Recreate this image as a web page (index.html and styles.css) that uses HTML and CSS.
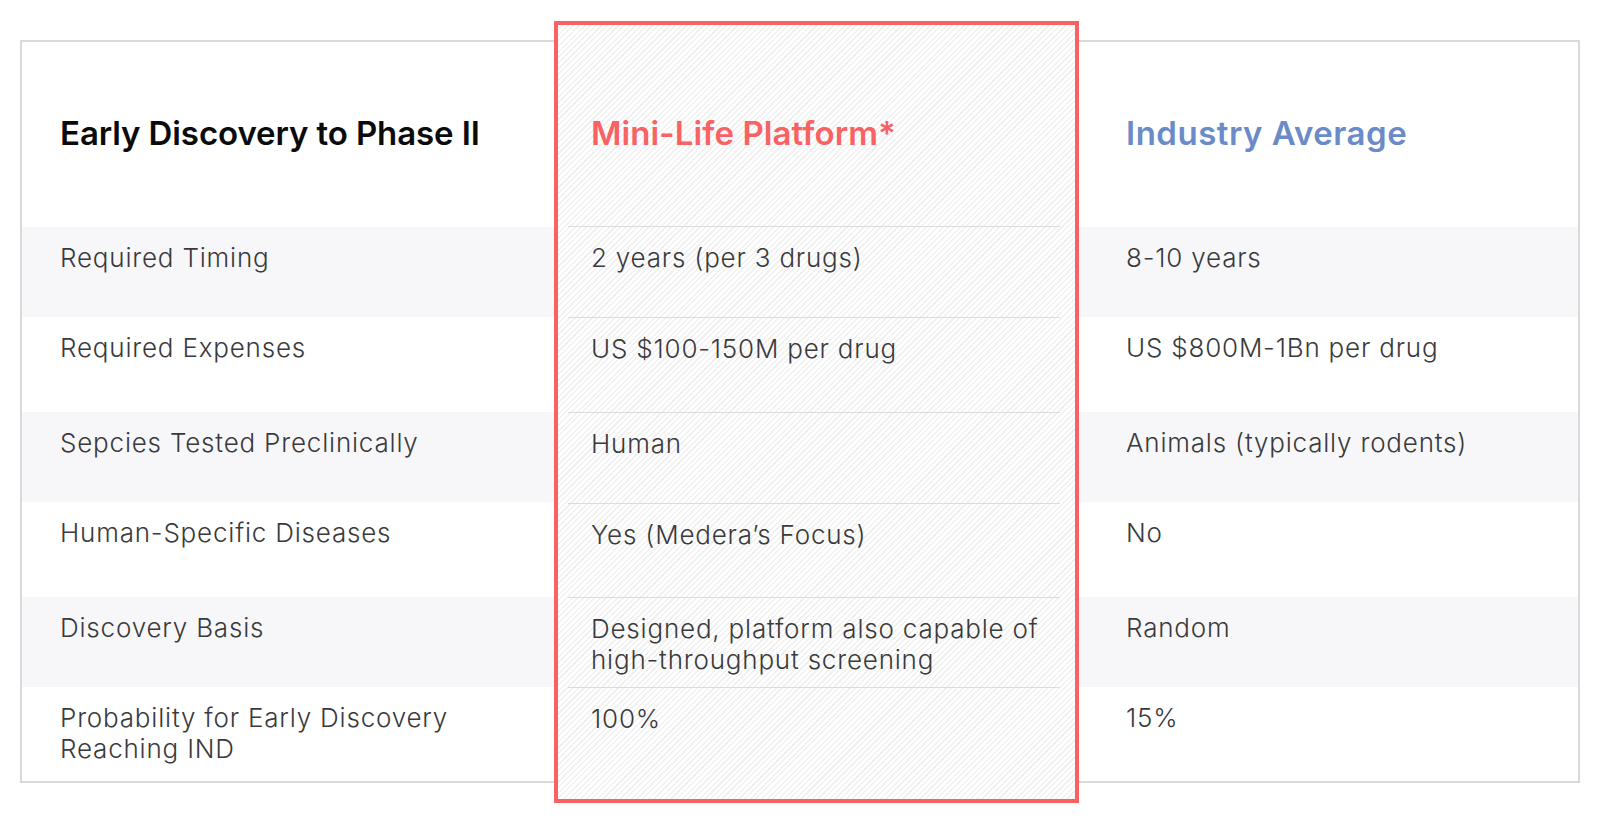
FILE: index.html
```html
<!DOCTYPE html>
<html lang="en">
<head>
<meta charset="utf-8">
<title>Early Discovery to Phase II</title>
<link rel="stylesheet" href="styles.css">
</head>
<body>
<div class="page">
  <div class="compare">
    <div class="col col-label">
      <div class="cell head"><h2 class="title">Early Discovery to Phase II</h2></div>
      <div class="cell r1 shade">Required Timing</div>
      <div class="cell r2">Required Expenses</div>
      <div class="cell r3 shade">Sepcies Tested Preclinically</div>
      <div class="cell r4">Human-Specific Diseases</div>
      <div class="cell r5 shade">Discovery Basis</div>
      <div class="cell r6">Probability for Early Discovery<br>Reaching IND</div>
    </div>
    <div class="col col-mini">
      <div class="mcell mhead"><h2 class="title title-red">Mini-Life Platform*</h2></div>
      <div class="mcell m1">2 years (per 3 drugs)</div>
      <div class="mcell m2">US $100-150M per drug</div>
      <div class="mcell m3">Human</div>
      <div class="mcell m4">Yes (Medera’s Focus)</div>
      <div class="mcell m5">Designed, platform also capable of<br>high-throughput screening</div>
      <div class="mcell m6">100%</div>
    </div>
    <div class="col col-industry">
      <div class="cell head"><h2 class="title title-blue">Industry Average</h2></div>
      <div class="cell r1 shade">8-10 years</div>
      <div class="cell r2">US $800M-1Bn per drug</div>
      <div class="cell r3 shade">Animals (typically rodents)</div>
      <div class="cell r4">No</div>
      <div class="cell r5 shade">Random</div>
      <div class="cell r6">15%</div>
    </div>
  </div>
</div>
</body>
</html>
```

FILE: styles.css
```css
* { box-sizing: border-box; }

html, body {
  margin: 0;
  padding: 0;
  background: #ffffff;
}

body {
  font-family: Inter, "Noto Sans", "Liberation Sans", sans-serif;
  font-weight: 300;
  font-size: 26px;
  letter-spacing: 0.8px;
  line-height: 31px;
  color: #3a3a3c;
}

.page {
  padding: 21px 20px 20px 20px;
}

.compare {
  display: flex;
  align-items: flex-start;
}

.col {
  display: flex;
  flex-direction: column;
}

.col-label,
.col-industry {
  margin-top: 19px;
  border-top: 2px solid #d9d9d9;
  border-bottom: 2px solid #d9d9d9;
}

.col-label {
  width: 534px;
  border-left: 2px solid #d9d9d9;
}

.col-industry {
  width: 501px;
  border-right: 2px solid #d9d9d9;
}

.col-label .cell { padding-left: 38px; }
.col-industry .cell { padding-left: 47px; }

.cell {
  padding-top: 15px;
  white-space: nowrap;
}

.cell.head { height: 185px; padding-top: 72px; }
.cell.r1 { height: 90px; }
.cell.r2 { height: 95px; }
.cell.r3 { height: 90px; }
.cell.r4 { height: 95px; }
.cell.r5 { height: 90px; }
.cell.r6 { height: 94px; }

.shade { background: #f7f7f9; }

.title {
  margin: 0;
  font-size: 33px;
  line-height: 38px;
  letter-spacing: -0.1px;
  font-weight: 600;
  color: #0b0b0b;
}

.title-red { color: #f96262; letter-spacing: 0.1px; }
.title-blue { color: #6a8bc8; letter-spacing: 0.5px; }

.col-mini {
  width: 525px;
  height: 782px;
  border: 4px solid #f96262;
  padding: 0 15px 0 10px;
  background-color: #ffffff;
  background-image: repeating-linear-gradient(135deg, #ffffff 0 2.4px, #f1f1f1 2.4px 4px);
}

.mcell {
  padding-left: 23px;
  padding-top: 15px;
  border-bottom: 1px solid #dcdcdc;
  white-space: nowrap;
}

.mcell.mhead { height: 202px; padding-top: 89px; }
.mcell.m1 { height: 91px; }
.mcell.m2 { height: 95px; }
.mcell.m3 { height: 91px; }
.mcell.m4 { height: 94px; }
.mcell.m5 { height: 90px; }
.mcell.m6 { height: 111px; border-bottom: 0; }
```
